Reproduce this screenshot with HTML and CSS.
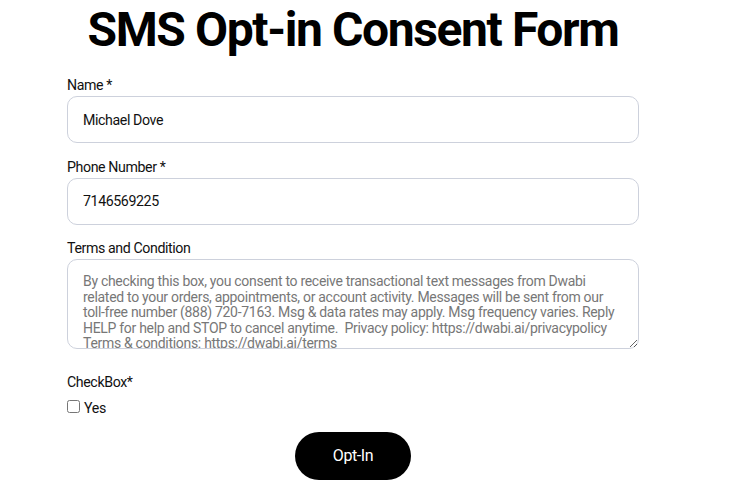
FILE: index.html
```html
<!DOCTYPE html>
<html lang="en">
<head>
    <meta charset="UTF-8">
    <meta name="viewport" content="width=device-width, initial-scale=1.0">
    <title>SMS Opt-in Consent Form</title>
    <link rel="stylesheet" href="styles.css">
</head>
<body>
    <div class="container">
        <h1>SMS Opt-in Consent Form</h1>
        <form id="consentForm">
            <div class="form-group">
                <label for="name">Name *</label>
                <input type="text" id="name" value="Michael Dove" required>
            </div>
            <div class="form-group">
                <label for="phone">Phone Number *</label>
                <input type="tel" id="phone" value="7146569225" required>
            </div>
            <div class="form-group">
                <label for="terms">Terms and Condition</label>
                <textarea id="terms" readonly>By checking this box, you consent to receive transactional text messages from Dwabi related to your orders, appointments, or account activity. Messages will be sent from our toll-free number (888) 720-7163. Msg &amp; data rates may apply. Msg frequency varies. Reply HELP for help and STOP to cancel anytime.  Privacy policy: https://dwabi.ai/privacypolicy Terms &amp; conditions: https://dwabi.ai/terms</textarea>
            </div>
            <div class="form-group check-group">
                <span class="group-title">CheckBox*</span>
                <label class="check" for="agree">
                    <input type="checkbox" id="agree" required>
                    Yes
                </label>
            </div>
            <div class="actions">
                <button type="submit" class="button">Opt-In</button>
            </div>
        </form>
    </div>
</body>
</html>
```

FILE: styles.css
```css
body {
    font-family: Roboto, Arial, sans-serif;
    margin: 0;
    padding: 0;
    background: #fff;
    color: #111;
    letter-spacing: -0.4px;
}

.container {
    width: 572px;
    margin-left: 67px;
}

h1 {
    text-align: center;
    font-size: 48px;
    font-weight: 700;
    letter-spacing: -1.4px;
    margin: 2px 0 19px;
    line-height: 56px;
    color: #000;
}

.form-group {
    margin-bottom: 15.5px;
}

.form-group label,
.group-title {
    display: block;
    font-size: 14.2px;
    line-height: 16px;
    margin-bottom: 3px;
}

.form-group input[type="text"],
.form-group input[type="tel"] {
    box-sizing: border-box;
    width: 100%;
    height: 47px;
    padding: 0 15px;
    border: 1px solid #cdd1dc;
    border-radius: 10px;
    font-family: Roboto, Arial, sans-serif;
    font-size: 14.2px;
    letter-spacing: -0.4px;
    color: #111;
    outline: none;
}

.form-group textarea {
    box-sizing: border-box;
    display: block;
    width: 100%;
    height: 90px;
    padding: 14px 15px;
    border: 1px solid #cdd1dc;
    border-radius: 10px;
    font-family: Roboto, Arial, sans-serif;
    font-size: 14px;
    letter-spacing: -0.3px;
    line-height: 15.6px;
    color: #777;
    overflow: hidden;
    resize: vertical;
    outline: none;
}

.check-group {
    margin-top: 25px;
}

.check-group .group-title {
    margin-bottom: 10px;
}

.check {
    display: flex;
    align-items: center;
    gap: 0;
    font-size: 14.5px;
}

.check input {
    margin: 0 1px 0 0;
    width: 13px;
    height: 13px;
}

.actions {
    display: flex;
    justify-content: center;
    margin-top: 11px;
}

.button {
    background-color: #000;
    color: #fff;
    border: none;
    width: 116px;
    height: 48px;
    border-radius: 24px;
    font-family: Roboto, Arial, sans-serif;
    font-size: 16px;
    letter-spacing: -0.4px;
    cursor: pointer;
}
```
